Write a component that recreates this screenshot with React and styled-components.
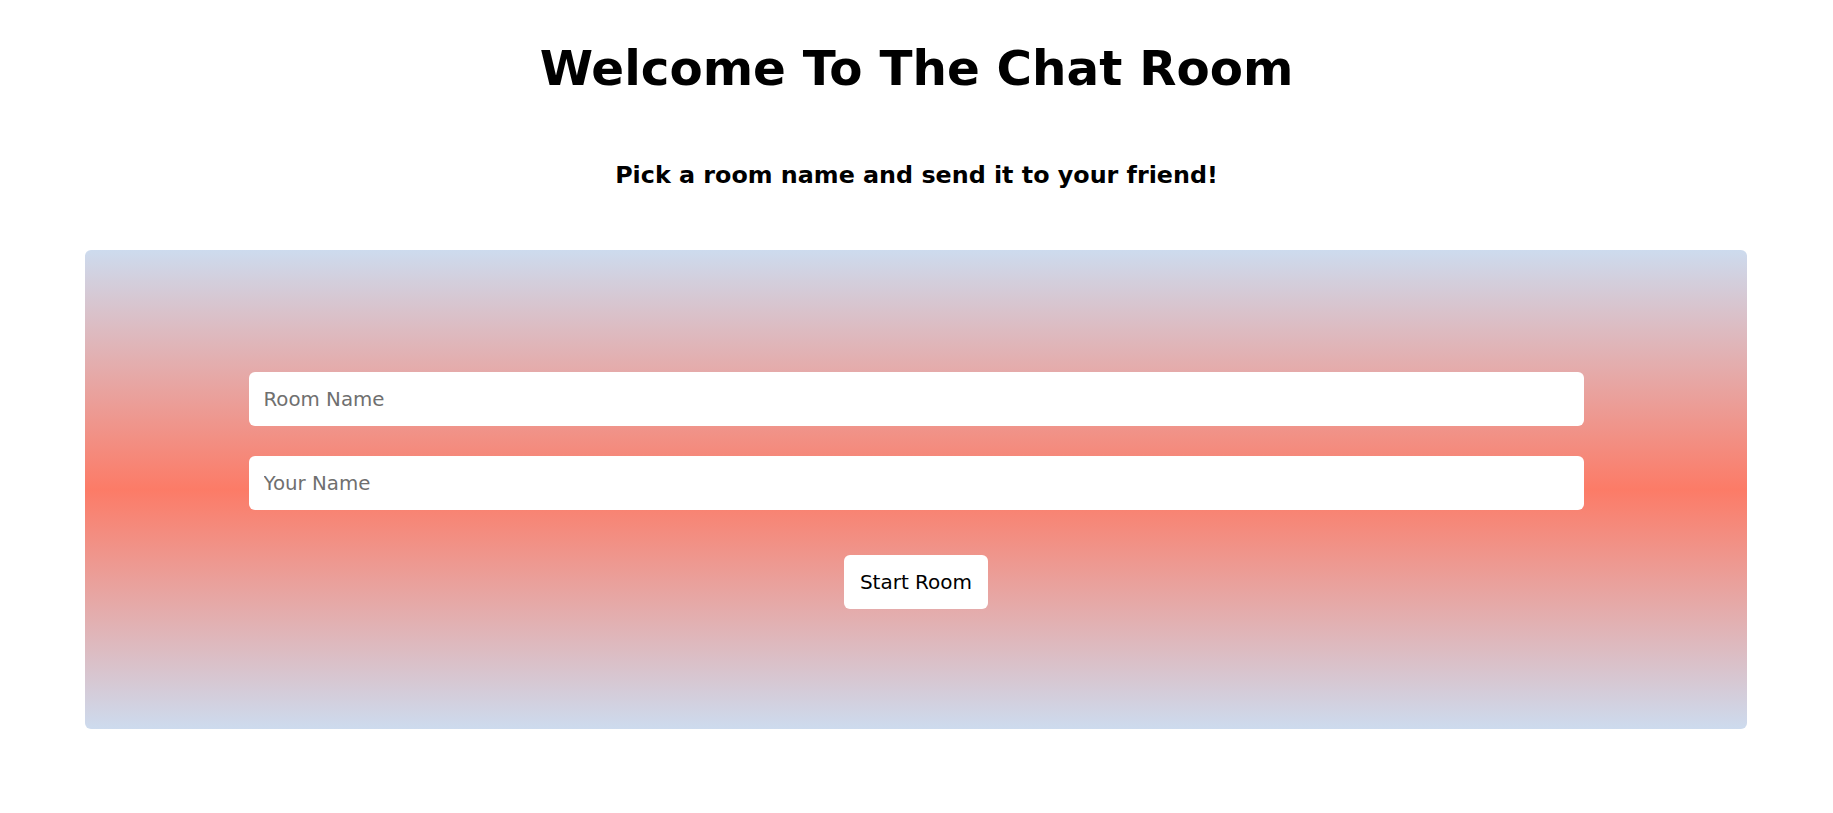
import React from "react";
import styled, { createGlobalStyle } from "styled-components";

const GlobalStyle = createGlobalStyle`
  html, body {
    margin: 0;
    padding: 0;
    background: #ffffff;
  }
  body {
    font-family: "DejaVu Sans", Verdana, sans-serif;
    color: #000;
  }
`;

const Page = styled.main`
  padding: 8px 0 40px;
  display: flex;
  flex-direction: column;
  align-items: center;
`;

const Title = styled.h1`
  margin: 32px 0 0;
  font-size: 48.4px;
  font-weight: 700;
  line-height: 56px;
  text-align: center;
`;

const Subtitle = styled.h2`
  margin: 65px 0 0;
  font-size: 23.8px;
  font-weight: 700;
  line-height: 28px;
  text-align: center;
`;

const Panel = styled.section`
  box-sizing: border-box;
  align-self: stretch;
  margin: 61px 86px 0 85px;
  height: 479px;
  border-radius: 6px;
  background: linear-gradient(#cddbee 0%, #fc7b67 50%, #cddbee 100%);
  display: flex;
  flex-direction: column;
  align-items: center;
  padding-top: 122px;
`;

const Field = styled.input`
  box-sizing: border-box;
  width: 1335px;
  height: 54px;
  margin-bottom: ${(p) => p.$gap}px;
  padding: 0 15px;
  border: none;
  border-radius: 6px;
  background: #fff;
  font-family: "DejaVu Sans", Verdana, sans-serif;
  font-size: 19.8px;
  color: #000;
  outline: none;
  &::placeholder {
    color: #6f6f6f;
  }
`;

const StartButton = styled.button`
  box-sizing: border-box;
  width: 144px;
  height: 54px;
  border: none;
  border-radius: 6px;
  background: #fff;
  font-family: "DejaVu Sans", Verdana, sans-serif;
  font-size: 20px;
  color: #000;
  cursor: pointer;
`;

export default function App() {
  return (
    <>
      <GlobalStyle />
      <Page>
        <Title>Welcome To The Chat Room</Title>
        <Subtitle>Pick a room name and send it to your friend!</Subtitle>
        <Panel>
          <Field placeholder="Room Name" $gap={30} />
          <Field placeholder="Your Name" $gap={45} />
          <StartButton>Start Room</StartButton>
        </Panel>
      </Page>
    </>
  );
}
